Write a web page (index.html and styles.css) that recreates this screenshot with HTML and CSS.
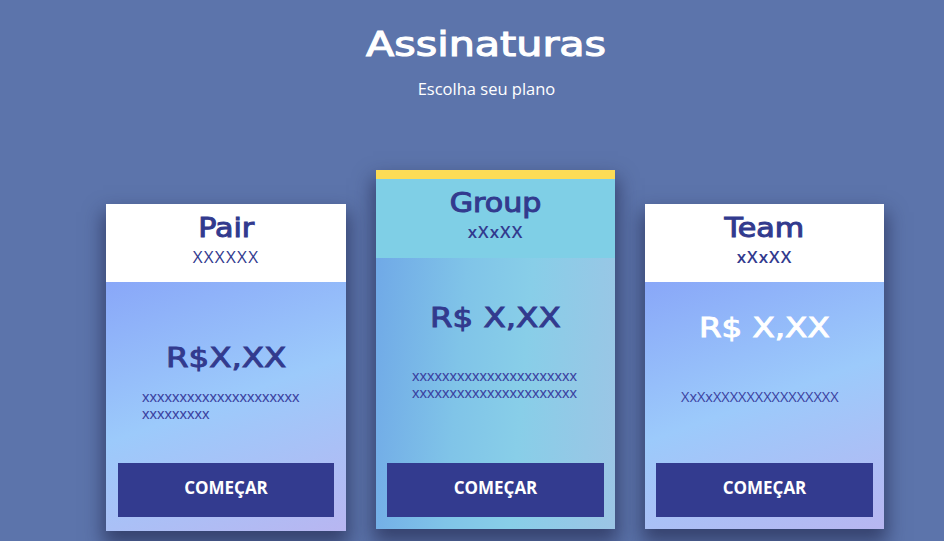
FILE: index.html
```html
<!DOCTYPE html>
<html lang="pt-BR">
<head>
<meta charset="utf-8">
<title>Assinaturas</title>
<link rel="stylesheet" href="styles.css">
</head>
<body>
<header class="page-head">
  <h1 class="page-title"><span class="wide">Assinaturas</span></h1>
  <p class="page-sub">Escolha seu plano</p>
</header>
<main class="plans">
  <section class="card card-pair">
    <div class="card-head">
      <h2 class="plan-name"><span class="wide-sm">Pair</span></h2>
      <p class="plan-tag">XXXXXX</p>
    </div>
    <div class="card-body">
      <p class="price"><span class="wide">R$X,XX</span></p>
      <p class="desc">xxxxxxxxxxxxxxxxxxxxx<br>xxxxxxxxx</p>
      <button class="cta">COMEÇAR</button>
    </div>
  </section>
  <section class="card card-group">
    <div class="card-head">
      <h2 class="plan-name"><span class="wide-sm">Group</span></h2>
      <p class="plan-tag plan-tag-strong">xXxXX</p>
    </div>
    <div class="card-body">
      <p class="price"><span class="wide">R$ X,XX</span></p>
      <p class="desc">xxxxxxxxxxxxxxxxxxxxxx<br>xxxxxxxxxxxxxxxxxxxxxx</p>
      <button class="cta">COMEÇAR</button>
    </div>
  </section>
  <section class="card card-team">
    <div class="card-head">
      <h2 class="plan-name"><span class="wide-sm">Team</span></h2>
      <p class="plan-tag plan-tag-strong">xXxXX</p>
    </div>
    <div class="card-body">
      <p class="price price-light"><span class="wide">R$ X,XX</span></p>
      <p class="desc desc-caps">XxXxXXXXXXXXXXXXXXX</p>
      <button class="cta">COMEÇAR</button>
    </div>
  </section>
</main>
</body>
</html>
```
FILE: styles.css
```css
* { box-sizing: border-box; }

html, body {
  margin: 0;
  padding: 0;
}

body {
  background: #5c74ab;
  width: 944px;
  height: 541px;
  overflow: hidden;
  font-family: "Open Sans", "Liberation Sans", sans-serif;
  color: #323a8e;
}

.page-head {
  padding-left: 29px;
  text-align: center;
}

.page-title {
  margin: 25px 0 0;
  font-family: "DejaVu Sans", sans-serif;
  font-weight: 400;
  font-size: 33px;
  line-height: 40px;
  color: #ffffff;
  -webkit-text-stroke: 1.1px #ffffff;
}

.wide {
  display: inline-block;
  transform: scaleX(1.25);
}

.wide-sm {
  display: inline-block;
  transform: scaleX(1.16);
}

.page-sub {
  margin: 13px 0 0;
  font-size: 16.5px;
  line-height: 22px;
  color: #ffffff;
}

.plans {
  display: flex;
  justify-content: center;
  align-items: flex-start;
  gap: 30px;
  padding-left: 46px;
  margin-top: 70px;
}

.card {
  width: 240px;
  display: flex;
  flex-direction: column;
  box-shadow: 0 11px 18px 3px rgba(28, 34, 70, 0.6);
}

.card-head {
  height: 78px;
  background: #ffffff;
  text-align: center;
  padding-top: 9px;
}

.plan-name {
  margin: 0;
  font-family: "DejaVu Sans", sans-serif;
  font-weight: 400;
  font-size: 26px;
  line-height: 30px;
  color: #323a8e;
  -webkit-text-stroke: 1px #323a8e;
}

.plan-tag {
  margin: 4px 0 0;
  font-size: 17px;
  line-height: 20px;
  letter-spacing: 1.3px;
  color: #323a8e;
}

.plan-tag-strong { font-weight: 600; letter-spacing: 1px; }

.card-body {
  flex: 1;
  display: flex;
  flex-direction: column;
  padding: 0 12px 12px;
}

.price {
  margin: 0;
  text-align: center;
  font-family: "DejaVu Sans", sans-serif;
  font-size: 26px;
  line-height: 30px;
  color: #323a8e;
  -webkit-text-stroke: 0.9px #323a8e;
}

.price-light {
  color: #ffffff;
  -webkit-text-stroke: 0.9px #ffffff;
}

.desc {
  margin: 0;
  padding-left: 24px;
  text-align: left;
  font-family: "Liberation Sans", "Open Sans", sans-serif;
  font-size: 15px;
  line-height: 17px;
  color: #3a41a0;
}

.desc-caps {
  font-family: "Open Sans", "Liberation Sans", sans-serif;
  font-size: 14.5px;
  line-height: 17px;
}

.cta {
  margin-top: auto;
  height: 54px;
  width: 100%;
  border: 0;
  background: #333b8f;
  color: #ffffff;
  font-family: "Open Sans", "Liberation Sans", sans-serif;
  font-weight: 700;
  font-size: 17px;
  padding: 0 0 5px;
}

/* Pair */
.card-pair {
  margin-top: 34px;
  height: 327px;
}
.card-pair .card-body {
  padding-top: 61px;
  padding-bottom: 14px;
  background: linear-gradient(160deg, #89a7f8 0%, #9ccafb 48%, #b8b6f1 100%);
}
.card-pair .desc { margin-top: 15px; }

/* Group */
.card-group {
  width: 239px;
  height: 359px;
  border-top: 9px solid #fcdc56;
}
.card-group .card-head {
  height: 79px;
  background: #7fcfe6;
}
.card-group .card-body {
  padding-top: 45px;
  padding-left: 11px;
  padding-right: 11px;
  background: linear-gradient(95deg, #70a9e7 0%, #80c4e8 35%, #88cee8 60%, #9cc5e5 100%);
}
.card-group .desc {
  margin-top: 34px;
  padding-left: 25px;
}

/* Team */
.card-team {
  width: 239px;
  margin-top: 34px;
  height: 325px;
}
.card-team .card-body {
  padding-top: 31px;
  padding-left: 11px;
  padding-right: 11px;
  background: linear-gradient(160deg, #89a7f8 0%, #9ccafb 48%, #b8b6f1 100%);
}
.card-team .desc {
  margin-top: 45px;
  padding-left: 25px;
}
```
